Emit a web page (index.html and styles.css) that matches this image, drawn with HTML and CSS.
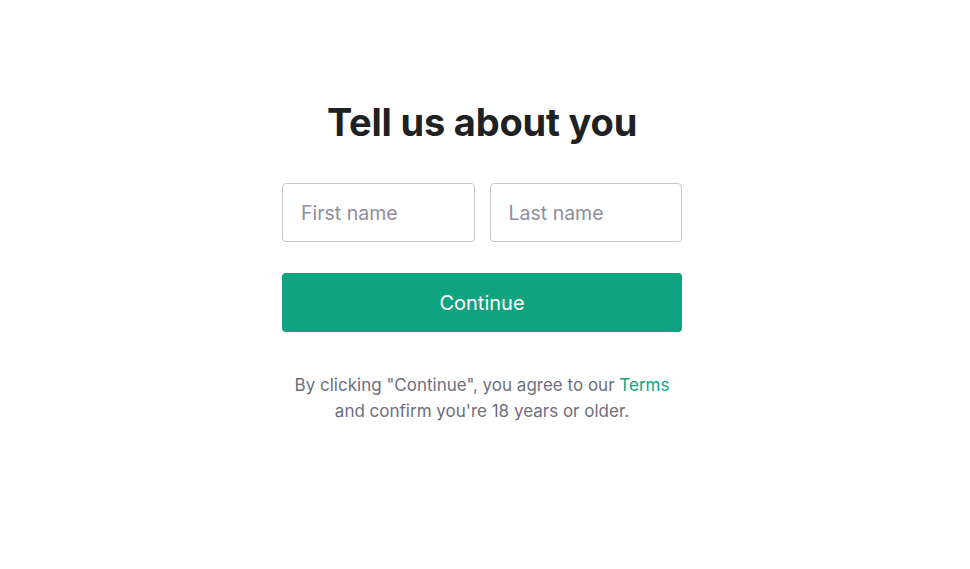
FILE: index.html
```html
<!DOCTYPE html>
<html lang="en">
<head>
<meta charset="utf-8">
<title>Tell us about you</title>
<link rel="stylesheet" href="styles.css">
</head>
<body>
<main class="page">
  <section class="card">
    <h1 class="title">Tell us about you</h1>
    <form class="form">
      <div class="name-row">
        <input class="field" type="text" placeholder="First name">
        <input class="field" type="text" placeholder="Last name">
      </div>
      <button class="continue" type="button">Continue</button>
    </form>
    <p class="legal">By clicking "Continue", you agree to our <a class="link" href="#">Terms</a><br>and confirm you're 18 years or older.</p>
  </section>
</main>
</body>
</html>
```

FILE: styles.css
```css
* { box-sizing: border-box; }
html, body {
  margin: 0;
  padding: 0;
  background: #ffffff;
  font-family: Inter, "Noto Sans", "Liberation Sans", sans-serif;
}
.page {
  display: flex;
  justify-content: center;
  padding-top: 98px;
  padding-right: 6px;
}
.card {
  width: 400px;
  display: flex;
  flex-direction: column;
  align-items: stretch;
}
.title {
  margin: 0;
  text-align: center;
  font-size: 38px;
  line-height: 48px;
  font-weight: 700;
  color: #202123;
  letter-spacing: -0.2px;
}
.form {
  margin-top: 37px;
  display: flex;
  flex-direction: column;
  gap: 31px;
}
.name-row {
  display: flex;
  gap: 15px;
}
.field {
  flex: 1;
  min-width: 0;
  height: 59px;
  border: 1px solid #c2c8d0;
  border-radius: 4px;
  padding: 0 18px;
  font-family: inherit;
  font-size: 19.5px;
  color: #2d333a;
  background: #fff;
  outline: none;
}
.field::placeholder { color: #8e8ea0; opacity: 1; }
.continue {
  height: 59px;
  border: none;
  border-radius: 4px;
  background: #10a37f;
  color: #fff;
  font-family: inherit;
  font-size: 20px;
  cursor: pointer;
}
.legal {
  margin: 40px 0 0;
  text-align: center;
  font-size: 17px;
  line-height: 26px;
  color: #6e6e80;
}
.link { color: #10a37f; text-decoration: none; }
```
